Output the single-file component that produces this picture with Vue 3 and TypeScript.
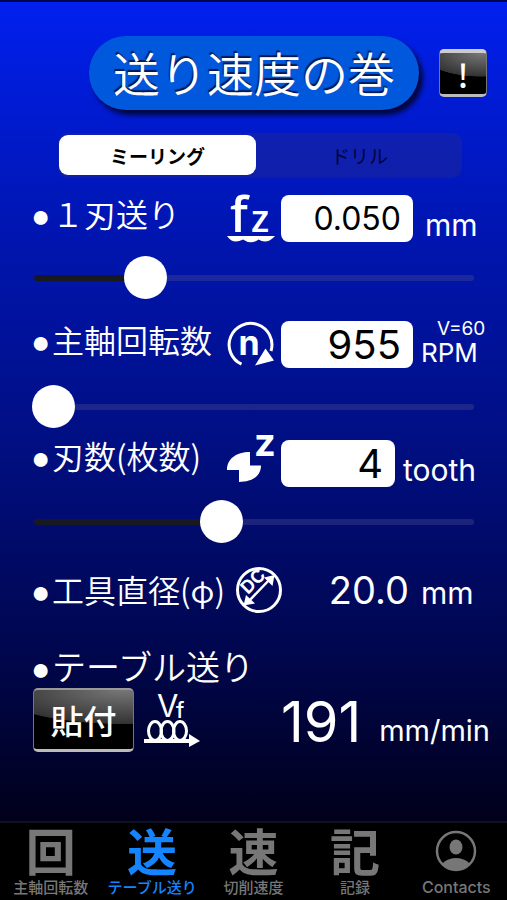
<script setup lang="ts">
import { ref } from 'vue'

interface Tab {
  glyph: string
  label: string
}

const mode = ref<'milling' | 'drill'>('milling')
const feed = ref('0.050')
const speed = ref('955')
const teeth = ref('4')

const feedPos = ref(23)
const speedPos = ref(0)
const teethPos = ref(42)

const tabs: Tab[] = [
  { glyph: '回', label: '主軸回転数' },
  { glyph: '送', label: 'テーブル送り' },
  { glyph: '速', label: '切削速度' },
  { glyph: '記', label: '記録' },
  { glyph: '', label: 'Contacts' },
]
const activeTab = ref(1)
</script>

<template>
  <div class="screen">
    <main class="content">
      <header class="header">
        <h1 class="title">送り速度の巻</h1>
        <button type="button" class="gloss info">!</button>
      </header>

      <div class="segments">
        <button type="button" class="segment" :class="{ on: mode === 'milling' }" @click="mode = 'milling'">ミーリング</button>
        <button type="button" class="segment" :class="{ on: mode === 'drill' }" @click="mode = 'drill'">ドリル</button>
      </div>

      <section class="param">
        <div class="row">
          <label id="feed-label" class="label" for="feed"><span class="dot">●</span>１刃送り</label>
          <svg class="icon" viewBox="0 0 48 48" aria-hidden="true">
            <text x="3" y="37" class="glyph humanist" font-size="49">f</text>
            <text x="24" y="37" class="glyph humanist" font-size="38">z</text>
            <path d="M0 41H48Q40 50 31.500 44.500Q24 50 16 44.500Q6 50 0 41Z" fill="#fff" />
          </svg>
          <input id="feed" v-model="feed" class="field small" type="text" inputmode="decimal" />
          <span class="unit inset">mm</span>
        </div>
        <input v-model.number="feedPos" class="slider" type="range" min="0" max="100" aria-labelledby="feed-label" :style="{ '--fill': feedPos + '%' }" />
      </section>

      <section class="param wide">
        <div class="row">
          <label id="speed-label" class="label" for="speed"><span class="dot">●</span>主軸回転数</label>
          <svg class="icon" viewBox="0 0 48 48" aria-hidden="true">
            <path d="M14.5 43.2A21.4 21.4 0 1 1 44 30" fill="none" stroke="#fff" stroke-width="3" />
            <path d="M28 44.500L47 39.500L38.500 27.500Z" fill="#fff" />
            <text x="22" y="34" class="glyph" font-size="34" font-weight="700" text-anchor="middle">n</text>
          </svg>
          <input id="speed" v-model="speed" class="field" type="text" inputmode="numeric" />
          <span class="unit stack"><small class="note">V=60</small><span class="rpm">RPM</span></span>
        </div>
        <input v-model.number="speedPos" class="slider" type="range" min="0" max="100" aria-labelledby="speed-label" :style="{ '--fill': speedPos + '%' }" />
      </section>

      <section class="param tight">
        <div class="row">
          <label id="teeth-label" class="label" for="teeth"><span class="dot">●</span>刃数(枚数)</label>
          <svg class="icon tall" viewBox="0 0 48 54" aria-hidden="true">
            <path d="M0 37C0 26 9 19 23 19V32.500H34C34 43 25 49 12 49V37Z" fill="#fff" />
            <text x="38" y="23" class="glyph" font-size="38" font-weight="700" text-anchor="middle">z</text>
          </svg>
          <input id="teeth" v-model="teeth" class="field narrow" type="text" inputmode="numeric" />
          <span class="unit">tooth</span>
        </div>
        <input v-model.number="teethPos" class="slider" type="range" min="0" max="100" aria-labelledby="teeth-label" :style="{ '--fill': teethPos + '%' }" />
      </section>

      <div class="row diameter">
        <span class="label"><span class="dot">●</span>工具直径(φ)</span>
        <svg class="icon" viewBox="0 0 48 48" aria-hidden="true">
          <circle cx="24" cy="23" r="21.500" fill="none" stroke="#fff" stroke-width="3" />
          <path d="M12 36L37 10" stroke="#fff" stroke-width="2.500" />
          <path d="M8.500 38.500L11 28L20 36.500ZM39.500 8L29 10.500L37.500 19Z" fill="#fff" />
          <text transform="translate(13 28) rotate(-45)" class="glyph" font-size="18" font-weight="700">DC</text>
        </svg>
        <output class="value">20.0</output>
        <span class="unit">mm</span>
      </div>

      <p class="label result-label"><span class="dot">●</span>テーブル送り</p>
      <div class="result">
        <button type="button" class="gloss paste">貼付</button>
        <svg class="coil" viewBox="0 0 58 58" aria-hidden="true">
          <text x="13" y="23" class="glyph" font-size="31" font-weight="400">V</text>
          <text x="32" y="24" class="glyph" font-size="22" font-weight="500">f</text>
          <g fill="none" stroke="#fff" stroke-width="3">
            <ellipse cx="11" cy="37" rx="6.500" ry="9.500" />
            <ellipse cx="23.500" cy="37" rx="6.500" ry="9.500" />
            <ellipse cx="36" cy="37" rx="6.500" ry="9.500" />
            <path d="M0 47H47" stroke-width="4" />
          </g>
          <path d="M45 40L56 47L45 53Z" fill="#fff" />
        </svg>
        <output class="total">191</output>
        <span class="per">mm/min</span>
      </div>
    </main>

    <nav class="tabs">
      <button v-for="(tab, i) in tabs" :key="tab.label" type="button" class="tab" :class="{ active: i === activeTab }" @click="activeTab = i">
        <span v-if="tab.glyph" class="kanji">{{ tab.glyph }}</span>
        <span v-else class="kanji">
          <svg class="person" viewBox="0 0 42 42" aria-hidden="true">
            <defs><clipPath id="ring"><circle cx="21" cy="21" r="19" /></clipPath></defs>
            <circle cx="21" cy="21" r="19" fill="none" stroke="currentColor" stroke-width="2.500" />
            <ellipse cx="21" cy="17" rx="6.500" ry="7.500" fill="currentColor" />
            <ellipse cx="21" cy="40" rx="16" ry="12" fill="currentColor" clip-path="url(#ring)" />
          </svg>
        </span>
        <span class="caption" :class="{ latin: !tab.glyph }">{{ tab.label }}</span>
      </button>
    </nav>
  </div>
</template>

<style>
body {
  margin: 0;
  background: #000;
}
</style>

<style scoped>
.screen {
  display: flex;
  flex-direction: column;
  min-height: 100vh;
  box-sizing: border-box;
  border-top: 2px solid #00044c;
  background: linear-gradient(#0020ee, #0016b4 24%, #000e7c 52%, #00064c 73%, #000018 92%);
  color: #fff;
  font-family: Inter, "Noto Sans CJK JP", sans-serif;
}

button,
input {
  font-family: inherit;
  box-sizing: border-box;
  margin: 0;
  border: 0;
}

.content {
  flex: 1;
  padding: 34px 17px 0 33px;
}

.header {
  display: flex;
  align-items: center;
  justify-content: flex-end;
  gap: 20px;
  padding-right: 3px;
}

.title {
  margin: 0;
  width: 330px;
  padding-bottom: 2px;
  line-height: 72px;
  border-radius: 37px;
  background: #0058dc;
  box-shadow: 4px 5px 5px #00063c;
  text-align: center;
  font-family: "Noto Sans CJK JP", sans-serif;
  font-size: 47px;
  font-weight: 350;
  text-shadow: -1px -2px 1px #001a50;
}

.gloss {
  border: 1px solid #777;
  border-top: 2px solid #999;
  border-bottom: 3px solid #bbb;
  border-radius: 5px;
  background: radial-gradient(ellipse 130% 58% at 90% 0, #777 0, #333 98%, #000 100%);
  color: #fff;
  padding: 0;
  font-family: "Noto Sans CJK JP", sans-serif;
}

.info {
  width: 48px;
  height: 48px;
  border-top-width: 4px;
  border-top-color: #ccc;
  font-size: 32px;
  font-weight: 500;
  line-height: 40px;
}

.segments {
  display: flex;
  margin: 23px 28px 17px 25px;
  height: 45px;
  border-radius: 10px;
  background: rgba(50, 50, 120, 0.3);
}

.segment {
  flex: 1;
  margin: 2px 4px 3px 1px;
  border-radius: 9px;
  background: none;
  color: #000438;
  font-size: 19px;
  font-weight: 400;
}

.segment.on {
  background: #fff;
  color: #000;
  font-weight: 700;
}

.row {
  display: flex;
  height: 47px;
}

.label {
  flex: 1;
  font-family: "Noto Sans CJK JP", sans-serif;
  font-size: 32px;
  font-weight: 350;
  line-height: 36px;
  white-space: nowrap;
}

.dot {
  display: inline-block;
  width: 19px;
  font-family: "DejaVu Sans", sans-serif;
  font-size: 32px;
  line-height: 24px;
  text-indent: -2px;
}

.icon {
  flex: none;
  width: 48px;
  height: 48px;
  margin-right: 6px;
  overflow: visible;
}

.icon.tall {
  height: 54px;
  align-self: flex-end;
}

.glyph {
  fill: #fff;
  font-family: Inter, sans-serif;
}

.humanist {
  font-family: "Open Sans", sans-serif;
  font-weight: 600;
}

.field {
  flex: none;
  width: 132px;
  height: 47px;
  padding: 0 12px;
  border-radius: 8px;
  background: #fff;
  color: #000;
  text-align: right;
  font-size: 40px;
}

.field.small {
  font-size: 32px;
}

.field.narrow {
  width: 114px;
}

.unit {
  flex: none;
  align-self: flex-end;
  box-sizing: border-box;
  width: 77px;
  padding: 0 0 2px 8px;
  font-size: 30px;
  line-height: 30px;
  white-space: nowrap;
}

.narrow + .unit {
  width: 95px;
}

.unit.inset {
  padding-left: 12px;
}

.unit.stack {
  display: flex;
  flex-direction: column;
}

.note {
  padding-left: 16px;
  font-size: 19px;
  line-height: 22px;
}

.rpm {
  font-size: 26px;
  line-height: 26px;
}

.slider {
  display: block;
  appearance: none;
  width: calc(100% - 17px);
  height: 44px;
  margin: 14px 16px 21px 1px;
  background: none;
}

.wide .slider {
  margin-top: 17px;
  margin-bottom: 11px;
}

.tight .slider {
  margin-top: 13px;
  margin-bottom: 23px;
}

.slider::-webkit-slider-runnable-track {
  height: 6px;
  border-radius: 3px;
  background: linear-gradient(90deg, #181820 var(--fill), rgba(70, 70, 140, 0.4) var(--fill));
}

.slider::-webkit-slider-thumb {
  appearance: none;
  width: 39px;
  height: 39px;
  margin-top: -17px;
  border-radius: 50%;
  background: #fff;
  box-shadow: 0 0 0 2px #fff;
}

.tight .label {
  line-height: 30px;
}

.diameter .label {
  line-height: 44px;
}

.diameter .icon {
  margin-right: 0;
}

.value {
  width: 126px;
  text-align: right;
  font-size: 38px;
  line-height: 47px;
}

.diameter .unit {
  width: 81px;
  padding-bottom: 6px;
  padding-left: 12px;
}

.result-label {
  margin: 34px 0 4px;
  font-size: 34px;
}

.result {
  display: flex;
  align-items: flex-end;
  height: 64px;
}

.paste {
  width: 101px;
  height: 64px;
  font-size: 33px;
  font-weight: 500;
}

.coil {
  width: 58px;
  height: 58px;
  margin-left: 10px;
  overflow: visible;
}

.total {
  flex: 1;
  text-align: right;
  font-size: 56px;
  line-height: 60px;
}

.per {
  padding: 0 0 4px 18px;
  font-size: 29px;
}

.tabs {
  display: grid;
  grid-template-columns: repeat(5, 1fr);
  height: 79px;
  box-sizing: border-box;
  border-top: 2px solid #101025;
  background: #000;
}

.tab {
  display: flex;
  flex-direction: column;
  align-items: center;
  gap: 3px;
  padding: 1px 0 0;
  background: none;
  color: #777;
}

.tab.active {
  color: #1484ff;
}

.kanji {
  display: flex;
  align-items: center;
  height: 50px;
  font-family: "Noto Sans CJK JP", sans-serif;
  font-size: 50px;
  font-weight: 700;
  line-height: 50px;
}

.person {
  width: 42px;
  height: 42px;
  padding-top: 4px;
}

.caption {
  font-family: "Noto Sans CJK JP", sans-serif;
  font-size: 15px;
  font-weight: 500;
  line-height: 20px;
  white-space: nowrap;
}

.caption.latin {
  font-family: Inter, sans-serif;
  font-size: 16px;
}
</style>
